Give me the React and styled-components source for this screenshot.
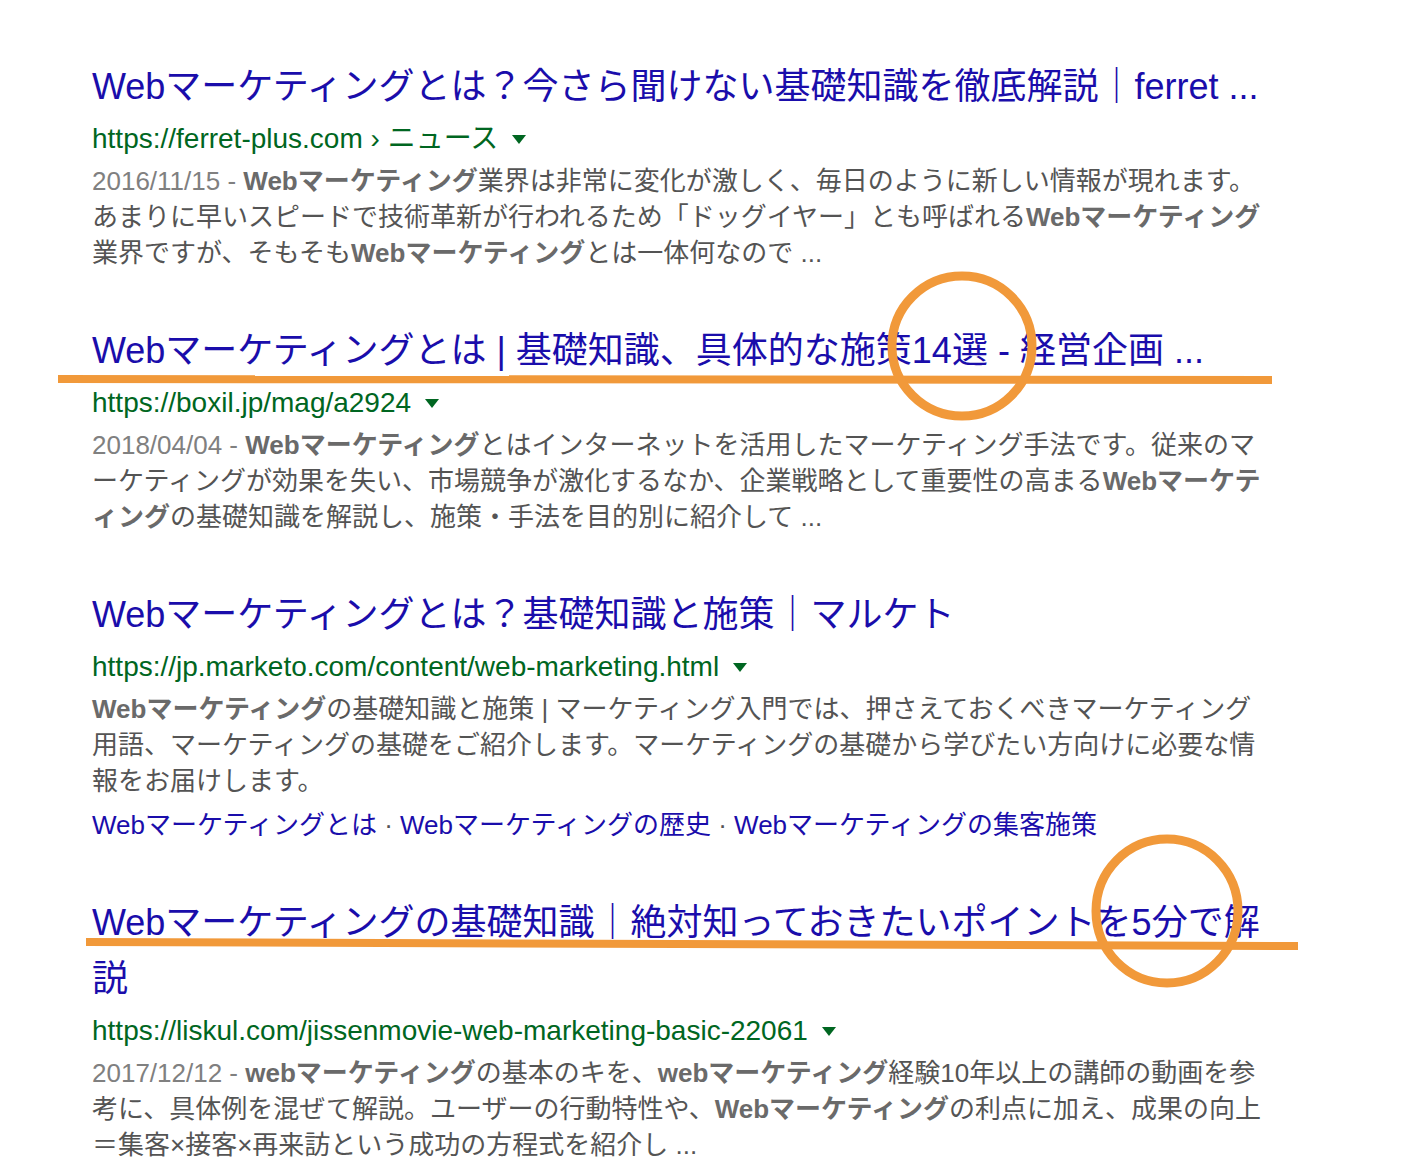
import React from "react"
import styled, { createGlobalStyle } from "styled-components"

const GlobalStyle = createGlobalStyle`
  html, body {
    margin: 0;
    padding: 0;
    background: #fff;
  }
  body {
    font-family: "Liberation Sans", Arial, "Noto Sans CJK JP", sans-serif;
  }
`

const Page = styled.div`
  position: relative;
  width: 1408px;
  height: 1164px;
  overflow: hidden;
  box-sizing: border-box;
  padding: 59px 0 0 92px;
  background: #fff;
`

const ResultList = styled.div`
  display: flex;
  flex-direction: column;
  gap: 52px;
`

const Result = styled.div`
  display: flex;
  flex-direction: column;
`

const Title = styled.a`
  display: block;
  font-size: 36px;
  line-height: 56px;
  color: #1a0dab;
  text-decoration: none;
  white-space: nowrap;
`

const UrlRow = styled.div`
  display: flex;
  align-items: center;
  height: 48px;
  line-height: 48px;
  font-size: 28px;
  color: #006621;
  white-space: nowrap;
`

const Caret = styled.span`
  display: inline-block;
  width: 0;
  height: 0;
  margin-left: 14px;
  margin-top: 0;
  border-left: 7px solid transparent;
  border-right: 7px solid transparent;
  border-top: 9px solid #006621;
`

const Snippet = styled.div`
  font-size: 26px;
  line-height: 36px;
  color: #545454;
  white-space: nowrap;
`

const Line = styled.div``

const Date = styled.span`
  color: #808080;
`

const Em = styled.b`
  font-weight: bold;
  color: #6a6a6a;
`

const Sitelinks = styled.div`
  margin-top: 8px;
  font-size: 26px;
  line-height: 36px;
  color: #545454;
  white-space: nowrap;
`

const Sitelink = styled.a`
  color: #1a0dab;
  text-decoration: none;
`

const Overlay = styled.svg`
  position: absolute;
  top: 0;
  left: 0;
  pointer-events: none;
`

const ORANGE = "#f1993a"

const results = [
  {
    title: ["Webマーケティングとは？今さら聞けない基礎知識を徹底解説｜ferret ..."],
    url: "https://ferret-plus.com › ニュース",
    snippet: [
      [<Date key="d">2016/11/15 - </Date>, <Em key="e">Webマーケティング</Em>, "業界は非常に変化が激しく、毎日のように新しい情報が現れます。"],
      ["あまりに早いスピードで技術革新が行われるため「ドッグイヤー」とも呼ばれる", <Em key="e">Webマーケティング</Em>],
      ["業界ですが、そもそも", <Em key="e">Webマーケティング</Em>, "とは一体何なので ..."],
    ],
  },
  {
    title: ["Webマーケティングとは | 基礎知識、具体的な施策14選 - 経営企画 ..."],
    url: "https://boxil.jp/mag/a2924",
    snippet: [
      [<Date key="d">2018/04/04 - </Date>, <Em key="e">Webマーケティング</Em>, "とはインターネットを活用したマーケティング手法です。従来のマ"],
      ["ーケティングが効果を失い、市場競争が激化するなか、企業戦略として重要性の高まる", <Em key="e">Webマーケテ</Em>],
      [<Em key="e">ィング</Em>, "の基礎知識を解説し、施策・手法を目的別に紹介して ..."],
    ],
  },
  {
    title: ["Webマーケティングとは？基礎知識と施策｜マルケト"],
    url: "https://jp.marketo.com/content/web-marketing.html",
    snippet: [
      [<Em key="e">Webマーケティング</Em>, "の基礎知識と施策 | マーケティング入門では、押さえておくべきマーケティング"],
      ["用語、マーケティングの基礎をご紹介します。マーケティングの基礎から学びたい方向けに必要な情"],
      ["報をお届けします。"],
    ],
    sitelinks: ["Webマーケティングとは", "Webマーケティングの歴史", "Webマーケティングの集客施策"],
  },
  {
    title: ["Webマーケティングの基礎知識｜絶対知っておきたいポイントを5分で解", "説"],
    url: "https://liskul.com/jissenmovie-web-marketing-basic-22061",
    snippet: [
      [<Date key="d">2017/12/12 - </Date>, <Em key="e">webマーケティング</Em>, "の基本のキを、", <Em key="e2">webマーケティング</Em>, "経験10年以上の講師の動画を参"],
      ["考に、具体例を混ぜて解説。ユーザーの行動特性や、", <Em key="e">Webマーケティング</Em>, "の利点に加え、成果の向上"],
      ["＝集客×接客×再来訪という成功の方程式を紹介し ..."],
    ],
  },
]

const Annotations = () => (
  <Overlay width="1408" height="1164" viewBox="0 0 1408 1164">
    <line x1="58" y1="379" x2="1272" y2="380" stroke={ORANGE} strokeWidth="8" />
    <ellipse cx="962" cy="346" rx="70" ry="70" fill="none" stroke={ORANGE} strokeWidth="9" />
    <line x1="86" y1="942" x2="1298" y2="946" stroke={ORANGE} strokeWidth="8" />
    <ellipse cx="1167" cy="911" rx="71" ry="72" fill="none" stroke={ORANGE} strokeWidth="9" />
  </Overlay>
)

const App = () => {
  return (
    <>
      <GlobalStyle />
      <Page>
        <ResultList>
          {results.map((r, i) => (
            <Result key={i}>
              <Title href="#">
                {r.title.map((t, j) => (
                  <Line key={j}>{t}</Line>
                ))}
              </Title>
              <UrlRow>
                {r.url}
                <Caret />
              </UrlRow>
              <Snippet>
                {r.snippet.map((l, j) => (
                  <Line key={j}>{l}</Line>
                ))}
              </Snippet>
              {r.sitelinks ? (
                <Sitelinks>
                  {r.sitelinks.map((s, j) => (
                    <React.Fragment key={j}>
                      {j > 0 ? " · " : null}
                      <Sitelink href="#">{s}</Sitelink>
                    </React.Fragment>
                  ))}
                </Sitelinks>
              ) : null}
            </Result>
          ))}
        </ResultList>
        <Annotations />
      </Page>
    </>
  )
}

export default App
